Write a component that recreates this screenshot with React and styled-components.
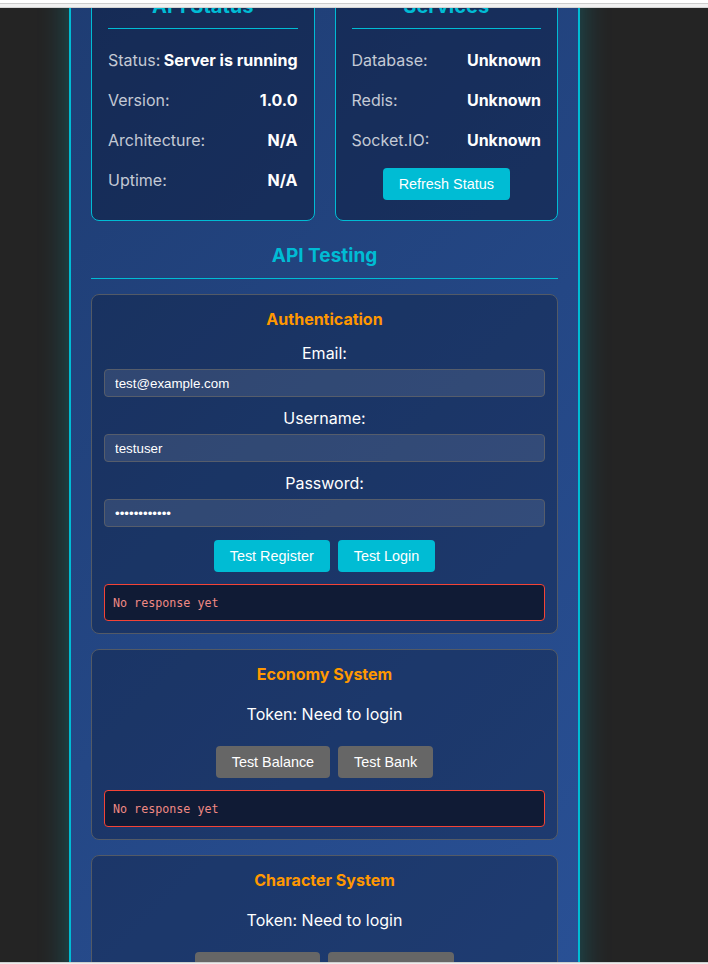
import styled, { createGlobalStyle } from 'styled-components';

const GlobalStyle = createGlobalStyle`
  html, body {
    margin: 0;
    padding: 0;
    height: 100%;
  }
  body {
    background: #242424;
    font-family: Inter, 'Noto Sans', sans-serif;
    color: #fff;
  }
  #root {
    height: 100%;
  }
`;

const services = [
  { label: 'Database:', value: 'Unknown' },
  { label: 'Redis:', value: 'Unknown' },
  { label: 'Socket.IO:', value: 'Unknown' },
];

const apiStatus = [
  { label: 'Status:', value: 'Server is running' },
  { label: 'Version:', value: '1.0.0' },
  { label: 'Architecture:', value: 'N/A' },
  { label: 'Uptime:', value: 'N/A' },
];

function App() {
  return (
    <>
      <GlobalStyle />
      <Page>
        <TopEdge />
        <Viewport>
          <Panel>
            <StatusGrid>
              <StatusCard>
                <StatusTitle>API Status</StatusTitle>
                {apiStatus.map((row) => (
                  <StatusRow key={row.label}>
                    <span>{row.label}</span>
                    <strong>{row.value}</strong>
                  </StatusRow>
                ))}
              </StatusCard>
              <StatusCard>
                <StatusTitle>Services</StatusTitle>
                {services.map((row) => (
                  <StatusRow key={row.label}>
                    <span>{row.label}</span>
                    <strong>{row.value}</strong>
                  </StatusRow>
                ))}
                <Button $centered>Refresh Status</Button>
              </StatusCard>
            </StatusGrid>

            <SectionTitle>API Testing</SectionTitle>

            <TestCard>
              <CardTitle>Authentication</CardTitle>
              <Field>
                <FieldLabel>Email:</FieldLabel>
                <Input type='email' defaultValue='test@example.com' />
              </Field>
              <Field>
                <FieldLabel>Username:</FieldLabel>
                <Input type='text' defaultValue='testuser' />
              </Field>
              <Field>
                <FieldLabel>Password:</FieldLabel>
                <Input type='password' defaultValue='password1234' />
              </Field>
              <ButtonRow $top={13}>
                <Button>Test Register</Button>
                <Button>Test Login</Button>
              </ButtonRow>
              <ResponseBox>No response yet</ResponseBox>
            </TestCard>

            <TestCard>
              <CardTitle>Economy System</CardTitle>
              <TokenText>Token: Need to login</TokenText>
              <ButtonRow $top={20}>
                <Button $muted>Test Balance</Button>
                <Button $muted>Test Bank</Button>
              </ButtonRow>
              <ResponseBox>No response yet</ResponseBox>
            </TestCard>

            <TestCard>
              <CardTitle>Character System</CardTitle>
              <TokenText>Token: Need to login</TokenText>
              <ButtonRow $top={20}>
                <Button $muted>My Characters</Button>
                <Button $muted>Test Character</Button>
              </ButtonRow>
              <ResponseBox>No response yet</ResponseBox>
            </TestCard>
          </Panel>
        </Viewport>
        <BottomEdge />
      </Page>
    </>
  );
}

const Page = styled.div`
  height: 100vh;
  display: flex;
  flex-direction: column;
`;

const TopEdge = styled.div`
  flex: none;
  height: 8px;
  background: linear-gradient(
    to bottom,
    #ffffff 0 3px,
    #cdcdcd 3px 4px,
    #f1f1f1 4px 7px,
    #d4d4d4 7px 8px
  );
`;

const BottomEdge = styled.div`
  flex: none;
  height: 2px;
  box-sizing: border-box;
  border-top: 1px solid #cfcfcf;
  background: #ececec;
`;

const Viewport = styled.div`
  flex: 1;
  min-height: 0;
  overflow: hidden;
`;

const Panel = styled.main`
  width: 511px;
  box-sizing: border-box;
  margin: -57px 0 0 69px;
  padding: 20px 20px 40px;
  border: 2px solid #00bcd4;
  background: linear-gradient(135deg, #1e3c72 0%, #2a5298 100%);
  box-shadow: 0 0 28px rgba(0, 188, 212, 0.32);
`;

const StatusGrid = styled.div`
  display: grid;
  grid-template-columns: 1fr 1fr;
  gap: 20px;
`;

const StatusCard = styled.section`
  display: flex;
  flex-direction: column;
  padding: 20px 16px;
  border: 1px solid #00bcd4;
  border-radius: 8px;
  background: rgba(12, 22, 50, 0.45);
`;

const StatusTitle = styled.h3`
  margin: 0 0 11px;
  padding-bottom: 10px;
  border-bottom: 1px solid #00bcd4;
  color: #00bcd4;
  font-size: 20px;
  font-weight: 700;
  line-height: 24px;
  text-align: center;
`;

const StatusRow = styled.div`
  display: flex;
  justify-content: space-between;
  align-items: center;
  padding: 8px 0;
  font-size: 16px;
  line-height: 24px;

  span {
    color: rgba(255, 255, 255, 0.75);
  }

  strong {
    color: #fff;
    font-weight: 700;
  }
`;

const SectionTitle = styled.h2`
  margin: 23px 0 15px;
  padding-bottom: 10px;
  border-bottom: 1px solid #00bcd4;
  color: #00bcd4;
  font-size: 19px;
  font-weight: 700;
  line-height: 24px;
  text-align: center;
`;

const TestCard = styled.section`
  margin-bottom: 15px;
  padding: 12px;
  border: 1px solid #535a66;
  border-radius: 8px;
  background: rgba(12, 22, 50, 0.35);
`;

const CardTitle = styled.h3`
  margin: 0 0 10px;
  color: #ff9800;
  font-size: 16px;
  font-weight: 700;
  line-height: 24px;
  text-align: center;
`;

const Field = styled.div`
  display: flex;
  flex-direction: column;
  gap: 4px;

  & + & {
    margin-top: 9px;
  }
`;

const FieldLabel = styled.label`
  text-align: center;
  font-size: 16px;
  line-height: 24px;
  color: #fff;
`;

const Input = styled.input`
  height: 28px;
  box-sizing: border-box;
  padding: 0 10px;
  border: 1px solid #565d6b;
  border-radius: 4px;
  background: rgba(255, 255, 255, 0.1);
  color: #fff;
  font-family: 'Liberation Sans', Arial, sans-serif;
  font-size: 13.333px;
  outline: none;
`;

const TokenText = styled.p`
  margin: 16px 0 0;
  text-align: center;
  font-size: 16px;
  line-height: 24px;
  color: #fff;
`;

const ButtonRow = styled.div`
  display: flex;
  justify-content: center;
  gap: 8px;
  margin-top: ${(p) => p.$top}px;
`;

const Button = styled.button`
  height: 32px;
  padding: 0 16px;
  border: none;
  border-radius: 4px;
  background: ${(p) => (p.$muted ? '#666666' : '#00bcd4')};
  color: #fff;
  font-family: 'Liberation Sans', Arial, sans-serif;
  font-size: 14.4px;
  cursor: pointer;
  ${(p) => p.$centered && 'align-self: center; margin-top: 8px;'}
`;

const ResponseBox = styled.pre`
  margin: 12px 0 0;
  padding: 11px 8px 9px;
  border: 1px solid #f44336;
  border-radius: 4px;
  background: #101b35;
  color: #f08a84;
  font-family: 'DejaVu Sans Mono', 'Liberation Mono', monospace;
  font-size: 11.7px;
  line-height: 15px;
  white-space: pre-wrap;
`;

export default App;
